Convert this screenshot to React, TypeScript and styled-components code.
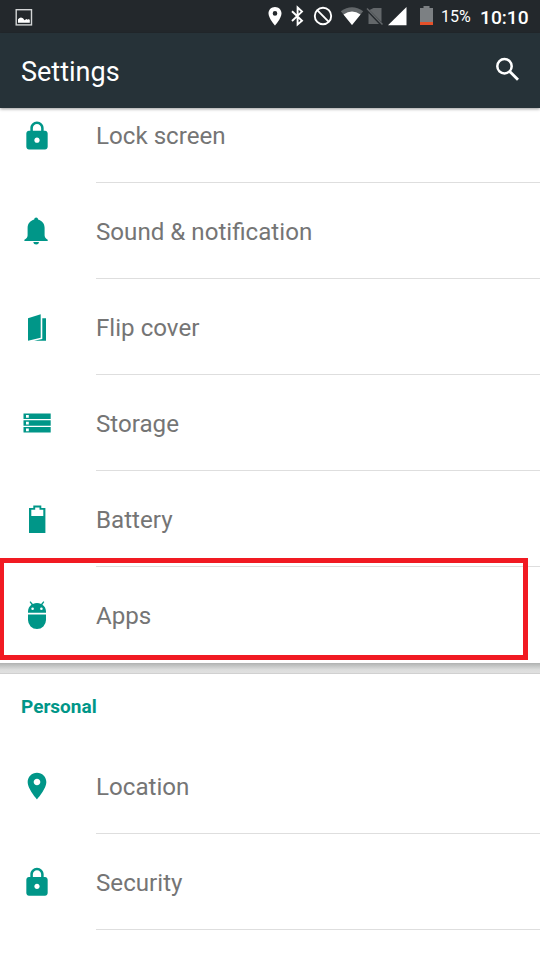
import React from 'react';
import styled, { createGlobalStyle } from 'styled-components';

const TEAL = '#009688';

const GlobalStyle = createGlobalStyle`
  * { box-sizing: border-box; }
  body { margin: 0; background: #fff; font-family: Roboto, "Liberation Sans", sans-serif; }
`;

const Screen = styled.div`
  position: relative;
  width: 540px;
  height: 960px;
  overflow: hidden;
  background: #fff;
  display: flex;
  flex-direction: column;
`;

const StatusBar = styled.header`
  flex: none;
  height: 33px;
  display: flex;
  align-items: center;
  justify-content: space-between;
  padding: 0 11px 0 15px;
  background: #23282c;
  color: #fff;
`;

const StatusGroup = styled.div`
  display: flex;
  align-items: center;
`;

const StatusIcons = styled.svg`
  display: block;
  width: 170px;
  height: 33px;
`;

const Percent = styled.span`
  width: 30px;
  margin-left: 6px;
  font-size: 16px;
  line-height: 33px;
  white-space: nowrap;
`;

const Clock = styled.span`
  width: 49px;
  margin-left: 9px;
  font-size: 19.2px;
  font-weight: 500;
  line-height: 33px;
  padding-top: 2px;
  white-space: nowrap;
`;

const AppBar = styled.div`
  flex: none;
  position: relative;
  z-index: 1;
  height: 75px;
  display: flex;
  align-items: center;
  justify-content: space-between;
  padding: 0 17px 0 21px;
  background: #263238;
  box-shadow: 0 1px 3px rgba(0, 0, 0, 0.4);
`;

const Title = styled.h1`
  margin: 3px 0 0;
  color: #fff;
  font-size: 27px;
  font-weight: 400;
  line-height: 36px;
`;

const SearchIcon = styled.svg`
  width: 32px;
  height: 32px;
  margin-bottom: 3px;
`;

const Card = styled.section<{ $scrolled?: boolean }>`
  flex: none;
  background: #fff;
  margin-top: ${p => (p.$scrolled ? '-21px' : '0')};
`;

const Separator = styled.div`
  flex: none;
  height: 11px;
  background: linear-gradient(#b0b2b1, #c6c8c7 30%, #dcdddc 60%, #e0e0e0 88%, #d0d0d0 92%);
`;

const SectionTitle = styled.h2`
  margin: 0;
  height: 64px;
  padding: 0 21px;
  color: ${TEAL};
  font-size: 19px;
  font-weight: 700;
  line-height: 66px;
`;

const Row = styled.div`
  height: 96px;
  display: flex;
`;

const RowIcon = styled.svg`
  flex: none;
  width: 32px;
  height: 32px;
  margin: 33px 43px 0 21px;
  fill: ${TEAL};
`;

const RowLabel = styled.div<{ $divided: boolean }>`
  flex: 1;
  border-bottom: 1px solid ${p => (p.$divided ? '#dedede' : 'transparent')};
  color: #757575;
  font-size: 24.15px;
  line-height: 99px;
`;

const Highlight = styled.div`
  position: absolute;
  z-index: 2;
  left: -1px;
  top: 558px;
  width: 529px;
  height: 102px;
  border: 5px solid #f11a22;
`;

const glyphs = {
  lock: (
    <path
      transform="translate(0 .2) scale(1.3333)"
      d="M18 8h-1V6c0-2.76-2.24-5-5-5S7 3.240 7 6v2H6c-1.100 0-2 .9-2 2v10c0 1.100.9 2 2 2h12c1.100 0 2-.9 2-2V10c0-1.100-.9-2-2-2zm-6 9c-1.100 0-2-.9-2-2s.9-2 2-2 2 .9 2 2-.9 2-2 2zm3.100-9H8.900V6c0-1.710 1.390-3.100 3.100-3.100s3.100 1.390 3.100 3.100v2z"
    />
  ),
  bell: (
    <path d="M15.2 1.5c1.1 0 1.8.7 1.9 2 3.8 1 6.500 4.200 6.500 8.200v7.600c0 1.900 1 3.300 3.100 4.500v1.100H3.400v-1.100c2.300-1.200 3.200-2.600 3.200-4.500v-7.600c0-4 2.800-7.200 6.600-8.200.1-1.300.8-2 2-2zM12.300 26h5.700c-.2 1.700-1.200 2.500-2.800 2.500S12.500 27.700 12.300 26z" />
  ),
  cover: (
    <>
      <path d="M7 6.200 19.700 2.200V25.700L7 28.800z" />
      <path d="M21.300 6.200H25V28.800H13L21.300 27z" />
    </>
  ),
  storage: (
    <path
      fillRule="evenodd"
      d="M2.500 5.500h27.200v5.500H2.500zM5 7v2.700h2.800V7zM2.500 12.200h27.200v5.500H2.500zM5 13.700v2.700h2.800v-2.700zM2.500 19h27.200v5.500H2.500zM5 20.500v2.700h2.800v-2.700z"
    />
  ),
  battery: (
    <path
      fillRule="evenodd"
      d="M12.300 1.500h8v2.400h4.100V29H8V3.900h4.300zM14.200 3.400v2.400h-3.900V12h12V5.800h-3.800V3.400z"
    />
  ),
  android: (
    <>
      <path
        fillRule="evenodd"
        d="M7 12.700v-1.200C7 8.700 8.400 6.300 10.500 4.800L8.600 2l.9-.8 2.400 2.800a9.500 9.500 0 0 1 8.200 0l2.300-2.800.9.800-1.900 2.800C23.600 6.300 25 8.700 25 11.500v1.200zM11.600 7.400a1.300 1.300 0 1 0 0 2.600 1.300 1.300 0 0 0 0-2.600zm8.800 0a1.300 1.300 0 1 0 0 2.600 1.300 1.300 0 0 0 0-2.600z"
      />
      <path d="M7 14.400h18v5.700a9 9 0 0 1-18 0z" />
    </>
  ),
  pin: (
    <path
      transform="translate(0 -1) scale(1.3333)"
      d="M12 2C8.130 2 5 5.130 5 9c0 5.250 7 13 7 13s7-7.750 7-13c0-3.870-3.130-7-7-7zm0 9.500c-1.380 0-2.500-1.120-2.500-2.500s1.120-2.500 2.500-2.500 2.500 1.120 2.500 2.500-1.120 2.500-2.500 2.500z"
    />
  ),
  lockLow: (
    <path
      transform="translate(0 -.7) scale(1.3333)"
      d="M18 8h-1V6c0-2.760-2.240-5-5-5S7 3.240 7 6v2H6c-1.100 0-2 .9-2 2v10c0 1.100.9 2 2 2h12c1.100 0 2-.9 2-2V10c0-1.100-.9-2-2-2zm-6 9c-1.100 0-2-.9-2-2s.9-2 2-2 2 .9 2 2-.9 2-2 2zm3.100-9H8.900V6c0-1.710 1.390-3.100 3.100-3.100s3.100 1.390 3.100 3.100v2z"
    />
  ),
};

type Item = { label: string; icon: keyof typeof glyphs };

const deviceItems: Item[] = [
  { label: 'Lock screen', icon: 'lock' },
  { label: 'Sound & notification', icon: 'bell' },
  { label: 'Flip cover', icon: 'cover' },
  { label: 'Storage', icon: 'storage' },
  { label: 'Battery', icon: 'battery' },
  { label: 'Apps', icon: 'android' },
];

const personalItems: Item[] = [
  { label: 'Location', icon: 'pin' },
  { label: 'Security', icon: 'lockLow' },
];

const SettingRow = ({ item, divided }: { item: Item; divided: boolean }) => (
  <Row>
    <RowIcon viewBox="0 0 32 32">{glyphs[item.icon]}</RowIcon>
    <RowLabel $divided={divided}>{item.label}</RowLabel>
  </Row>
);

export default function App() {
  return (
    <Screen>
      <GlobalStyle />
      <StatusBar>
        <svg width="18" height="18" viewBox="0 0 18 18">
          <rect x="1.200" y="1.700" width="15.300" height="15.200" fill="none" stroke="#d3d5d6" strokeWidth="1.400" />
          <path d="M3 14.700v-3.500l1.500-1.200 1.500-.6 2 .8 1.500 2 2-1.200 1.300.8 1-.7 1 1v2.600z" fill="#fff" />
        </svg>
        <StatusGroup>
          <StatusIcons viewBox="265 0 170 33" fill="#fff">
            <path
              fillRule="evenodd"
              d="M275 7c-3.700 0-6.500 2.800-6.500 6.400 0 4.700 6.500 12.100 6.500 12.100s6.500-7.400 6.500-12.100C281.500 9.800 278.700 7 275 7zm0 4.100a2.300 2.300 0 1 1 0 4.600 2.300 2.300 0 0 1 0-4.600z"
            />
            <path d="M292 11.300 302 20.800 297.600 24.500V7.500L302 11.600 292 21" fill="none" stroke="#fff" strokeWidth="1.900" />
            <circle cx="323" cy="16" r="8.200" fill="none" stroke="#fff" strokeWidth="1.900" />
            <path d="M317.200 10.200 328.800 21.800" stroke="#fff" strokeWidth="1.900" />
            <path d="M340.800 11.200Q352 3.200 363.200 11.200L352 25z" fill="#63676a" />
            <path d="M343.500 14.500Q352 8.500 360.500 14.500L352 25z" />
            <path d="M373.500 8H381.500V22L369.500 10zM368.500 13 379 24H368.500z" fill="#63676a" />
            <path d="M367 8.500 382.500 24.500" stroke="#63676a" strokeWidth="1.500" />
            <path d="M406.500 7V25.300H388z" />
            <path d="M423.500 6h6v2h3.500v14H420V8h3.500z" fill="#7c8083" />
            <path d="M420 22h13v3H420z" fill="#e5512a" />
          </StatusIcons>
          <Percent>15%</Percent>
          <Clock>10:10</Clock>
        </StatusGroup>
      </StatusBar>
      <AppBar>
        <Title>Settings</Title>
        <SearchIcon viewBox="0 0 32 32" fill="none" stroke="#fff">
          <circle cx="13.500" cy="13.200" r="7.200" strokeWidth="2.500" />
          <path d="M18.500 18.200 27 26.700" strokeWidth="2.900" />
        </SearchIcon>
      </AppBar>
      <Card $scrolled>
        {deviceItems.map((item, i) => (
          <SettingRow key={item.label} item={item} divided={i < deviceItems.length - 1} />
        ))}
      </Card>
      <Separator />
      <Card>
        <SectionTitle>Personal</SectionTitle>
        {personalItems.map(item => (
          <SettingRow key={item.label} item={item} divided />
        ))}
      </Card>
      <Highlight />
    </Screen>
  );
}
